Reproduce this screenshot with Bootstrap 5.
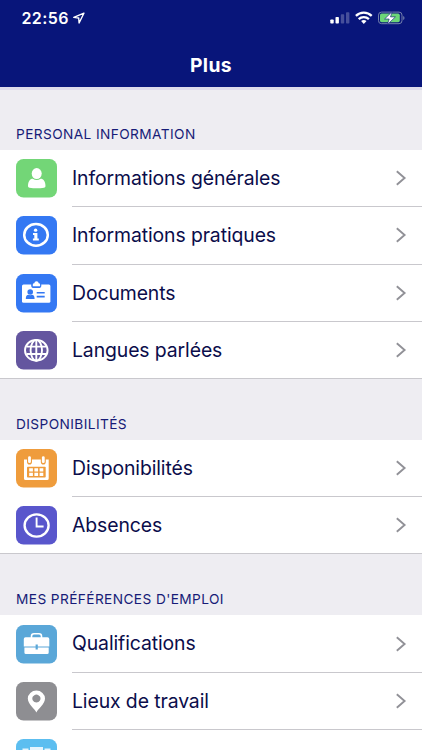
<!DOCTYPE html>
<html lang="fr">
<head>
<meta charset="utf-8">
<meta name="viewport" content="width=device-width, initial-scale=1">
<title>Plus</title>
<link href="https://cdn.jsdelivr.net/npm/bootstrap@5.3.0/dist/css/bootstrap.min.css" rel="stylesheet">
<style>
html,body{height:750px;overflow:hidden}
body{font-family:Inter,"Liberation Sans",sans-serif;background:#eeedf2;color:#0b0d4b}
.app-top{background:#08157a;height:87px;color:#fff}
.status{height:36px;padding:0 17px 0 21.5px}
.clock{font-size:16px;font-weight:600;letter-spacing:.4px}
.app-title{font-size:19.3px;font-weight:700;line-height:24px;letter-spacing:.4px;padding-top:17px}
.edge{height:3px;background:#dddcec}
main{height:660px}
.sect{height:61px;padding:0 16px 9px;font-size:13.7px;letter-spacing:.4px;line-height:14px;color:#171c78;margin:0;font-weight:400}
.sect-first{height:60px}
.rows{border-bottom:1px solid #c9c8cd}
.entry{height:57.3px;padding-left:16px;background:#fff}
.entry-body{margin-left:15px;height:100%;padding:0 15px 0 0;font-size:19.4px;letter-spacing:-.1px;border-bottom:1px solid #c9c8cd}
.entry:last-child .entry-body{border-color:transparent}
.rows .entry:last-child{height:56.1px;padding-top:1.2px}
.label{padding-top:1px}
svg{flex:none;display:block}
</style>
<script src="https://cdn.jsdelivr.net/npm/bootstrap@5.3.0/dist/js/bootstrap.bundle.min.js"></script>
</head>
<body>
<svg width="0" height="0" class="d-none"><symbol id="chev" viewBox="0 0 12 16"><path d="M1.8 1.2 9.6 8l-7.8 6.8" fill="none" stroke="#919197" stroke-width="1.9"/></symbol></svg>
<header class="app-top">
  <div class="status d-flex align-items-center justify-content-between">
    <div class="d-flex align-items-center"><span class="clock">22:56</span>
      <svg class="ms-1" width="12" height="12" viewBox="0 0 12 12"><path d="M10.9 1.2.8 5.4l4.9.6.4 5z" fill="none" stroke="#fff" stroke-width="1.4" stroke-linejoin="round"/></svg></div>
    <svg width="77" height="14" viewBox="0 0 77 14">
      <g fill="#fff"><rect x="2.3" y="8.5" width="3.4" height="4" rx=".8"/><rect x="7.5" y="6" width="3.4" height="6.5" rx=".8"/><rect x="12.8" y="3.2" width="3.4" height="9.3" rx=".8" opacity=".25"/><rect x="18" y="1.2" width="3.4" height="11.3" rx=".8" opacity=".25"/></g>
      <g fill="none" stroke="#fff" stroke-width="2.3"><path d="M27.9 4.9a11.3 11.3 0 0 1 15.8 0"/><path d="M30.7 8.1a7.4 7.4 0 0 1 10.2 0"/></g><path d="M33.1 10.1q2.7-2 5.4 0L35.8 12.9z" fill="#fff"/>
      <rect x="50.5" y="1.1" width="23.5" height="11.6" rx="3" fill="none" stroke="#7480ad"/><path d="M75.2 5v4q1.3-.6 1.3-2t-1.3-2z" fill="#7480ad"/><rect x="52" y="2.6" width="19.8" height="8.6" rx="1.6" fill="#6cd578"/><path d="M64.2.6 56.6 8h4.6l-1.8 5.4 8-7.5h-4.9z" fill="#fff" stroke="#08157a" stroke-width=".6"/>
    </svg>
  </div>
  <h1 class="app-title text-center mb-0">Plus</h1>
</header>
<div class="edge"></div>
<main class="overflow-hidden">
  <h2 class="sect sect-first d-flex align-items-end">PERSONAL INFORMATION</h2>
  <div class="rows">
    <div class="entry d-flex align-items-center">
      <svg width="41" height="39" viewBox="0 0 41 39"><rect width="41" height="38.5" rx="7.5" fill="#73d677"/><ellipse cx="20.7" cy="14.6" rx="5" ry="5.5" fill="#fff"/><path d="M12 27.2c0-5 2-7.5 4.8-7.5q3.9 2.6 7.8 0c2.8 0 4.9 2.5 4.9 7.5q-.1 1.3-1.5 1.5-7.3 1.3-14.5 0-1.4-.2-1.5-1.5z" fill="#fff"/></svg>
      <div class="entry-body flex-grow-1 d-flex align-items-center justify-content-between"><span class="label">Informations générales</span><svg width="12" height="16"><use href="#chev"/></svg></div>
    </div>
    <div class="entry d-flex align-items-center">
      <svg width="41" height="39" viewBox="0 0 41 39"><rect width="41" height="38.5" rx="7.5" fill="#3478f3"/><ellipse cx="20" cy="18.9" rx="11.8" ry="10.8" fill="none" stroke="#fff" stroke-width="2.5"/><ellipse cx="19.6" cy="14.2" rx="1.7" ry="1.6" fill="#fff"/><path d="M17 17h4.4v5.5h1.4v2.1h-5.9v-2.1h1.4v-3.4H17z" fill="#fff"/></svg>
      <div class="entry-body flex-grow-1 d-flex align-items-center justify-content-between"><span class="label">Informations pratiques</span><svg width="12" height="16"><use href="#chev"/></svg></div>
    </div>
    <div class="entry d-flex align-items-center">
      <svg width="41" height="39" viewBox="0 0 41 39"><rect width="41" height="38.5" rx="7.5" fill="#3478f3"/><rect x="6" y="10.5" width="28.4" height="18.3" rx="1.5" fill="#fff"/><path d="M15.2 10v1.4q0 2.6 2.8 2.6h4.5q2.8 0 2.8-2.6V10z" fill="#3478f3"/><path d="M16.8 12.2v-1.8q0-1.2 1.5-1.2.2-2 2.2-2t2.2 2q1.4 0 1.4 1.2v1.8z" fill="#fff"/><g fill="#3478f3"><ellipse cx="14.2" cy="18" rx="2.8" ry="2.7"/><path d="M9.8 25c0-3 1-4.2 2.7-4.2q1.7.8 3.4 0c1.7 0 2.7 1.2 2.7 4.2z"/><path d="M20.7 18h8v1.6h-8zM20.7 21.8h8v1.6h-8z"/></g></svg>
      <div class="entry-body flex-grow-1 d-flex align-items-center justify-content-between"><span class="label">Documents</span><svg width="12" height="16"><use href="#chev"/></svg></div>
    </div>
    <div class="entry d-flex align-items-center">
      <svg width="41" height="39" viewBox="0 0 41 39"><rect width="41" height="38.5" rx="7.5" fill="#64569f"/><g fill="none" stroke="#fff" stroke-width="1.9"><ellipse cx="20.3" cy="19.3" rx="11.3" ry="10.4"/><ellipse cx="20.3" cy="19.3" rx="5.7" ry="10.4"/><path d="M20.3 8.9v20.8M10.5 15.6h19.6M10.5 23h19.6"/></g></svg>
      <div class="entry-body flex-grow-1 d-flex align-items-center justify-content-between"><span class="label">Langues parlées</span><svg width="12" height="16"><use href="#chev"/></svg></div>
    </div>
  </div>
  <h2 class="sect d-flex align-items-end">DISPONIBILITÉS</h2>
  <div class="rows">
    <div class="entry d-flex align-items-center">
      <svg width="41" height="39" viewBox="0 0 41 39"><rect width="41" height="38.5" rx="7.5" fill="#ef9c3c"/><path d="M8 10.5h3v2.2q0 2.8 2.5 2.8t2.5-2.8v-2.2h8.8v2.2q0 2.8 2.5 2.8t2.5-2.8v-2.2h2.9v19q0 1.5-1.5 1.5H9.5Q8 31 8 29.5z" fill="#fff"/><rect x="12.1" y="7.2" width="2.8" height="6.8" rx="1.3" fill="#fff"/><rect x="25.9" y="7.2" width="2.8" height="6.8" rx="1.3" fill="#fff"/><rect x="11" y="17.7" width="18.7" height="10.8" rx=".8" fill="#ef9c3c"/><path d="M13.2 19.3h3.7v3.1h-3.7zm5.2 0h3.7v3.1h-3.7zm5.2 0h3.7v3.1h-3.7zm-10.4 4.5h3.7v3.1h-3.7zm5.2 0h3.7v3.1h-3.7zm5.2 0h3.7v3.1h-3.7z" fill="#fff"/></svg>
      <div class="entry-body flex-grow-1 d-flex align-items-center justify-content-between"><span class="label">Disponibilités</span><svg width="12" height="16"><use href="#chev"/></svg></div>
    </div>
    <div class="entry d-flex align-items-center">
      <svg width="41" height="39" viewBox="0 0 41 39"><rect width="41" height="38.5" rx="7.5" fill="#5956cc"/><ellipse cx="20.6" cy="19.5" rx="12" ry="11.1" fill="none" stroke="#fff" stroke-width="2.4"/><path d="M20.6 11.5v9h7" fill="none" stroke="#fff" stroke-width="1.9"/></svg>
      <div class="entry-body flex-grow-1 d-flex align-items-center justify-content-between"><span class="label">Absences</span><svg width="12" height="16"><use href="#chev"/></svg></div>
    </div>
  </div>
  <h2 class="sect d-flex align-items-end">MES PRÉFÉRENCES D'EMPLOI</h2>
  <div class="rows">
    <div class="entry d-flex align-items-center">
      <svg width="41" height="39" viewBox="0 0 41 39"><rect width="41" height="38.5" rx="7.5" fill="#5aa7d8"/><path d="M15.5 13v-1.8q0-2.4 2.5-2.4h5q2.5 0 2.5 2.4V13" fill="none" stroke="#fff" stroke-width="1.6"/><path d="M9.5 12.2h22q1.8 0 1.8 1.8v7.5H21.8v-2h-2.2v2H7.8V14q0-1.8 1.7-1.8zM8.4 22.6h11.2v2h2.2v-2h10.9v4.9q0 1.5-1.5 1.5H9.9q-1.5 0-1.5-1.5z" fill="#fff"/></svg>
      <div class="entry-body flex-grow-1 d-flex align-items-center justify-content-between"><span class="label">Qualifications</span><svg width="12" height="16"><use href="#chev"/></svg></div>
    </div>
    <div class="entry d-flex align-items-center">
      <svg width="41" height="39" viewBox="0 0 41 39"><rect width="41" height="38.5" rx="7.5" fill="#8e8e92"/><path fill-rule="evenodd" d="M20.4 30.6c-1.5-3.6-8.6-8.3-8.6-14a8.6 8 0 0 1 17.2 0c0 5.7-7.1 10.4-8.6 14zM20.4 12.6a4.1 4 0 1 0 .01 0z" fill="#fff"/></svg>
      <div class="entry-body flex-grow-1 d-flex align-items-center justify-content-between"><span class="label">Lieux de travail</span><svg width="12" height="16"><use href="#chev"/></svg></div>
    </div>
    <div class="entry d-flex align-items-center">
      <svg width="41" height="39" viewBox="0 0 41 39"><rect width="41" height="38.5" rx="7.5" fill="#5cbef0"/><path d="M14 8h13v22H14zM6.5 9.5h6v18h-6zM28.5 9.5h6v18h-6z" fill="#fff" opacity=".85"/></svg>
      <div class="entry-body flex-grow-1"></div>
    </div>
  </div>
</main>
</body>
</html>
